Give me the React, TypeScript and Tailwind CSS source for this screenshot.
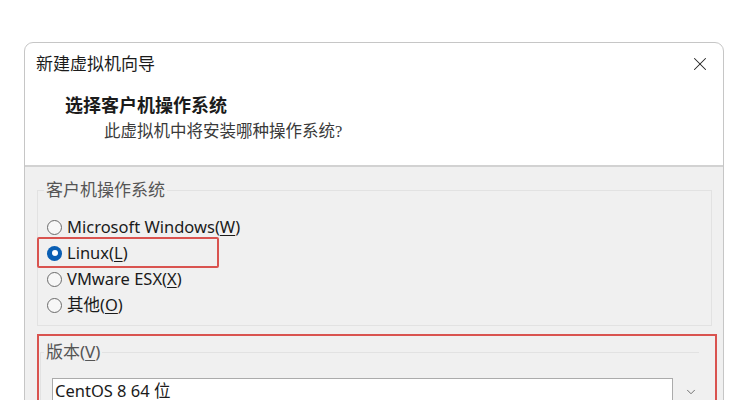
import React from 'react';
import { X, ChevronDown } from 'lucide-react';

const sans = "font-['Noto_Sans','Noto_Sans_CJK_SC',sans-serif]";

interface OsOption {
  label: string;
  key: string;
  checked?: boolean;
  highlight?: boolean;
}

const options: OsOption[] = [
  { label: 'Microsoft Windows', key: 'W' },
  { label: 'Linux', key: 'L', checked: true, highlight: true },
  { label: 'VMware ESX', key: 'X' },
  { label: '其他', key: 'O' },
];

const Radio = ({ checked }: { checked?: boolean }) =>
  checked ? (
    <span className="w-[15px] h-[15px] rounded-full bg-[#0a5fb4] flex items-center justify-center shrink-0">
      <span className="w-[6px] h-[6px] rounded-full bg-white" />
    </span>
  ) : (
    <span className="w-[15px] h-[15px] rounded-full border border-[#6b6b6b] bg-[#f7f7f7] shrink-0" />
  );

export default function App() {
  return (
    <div className={`w-[750px] h-[400px] overflow-hidden bg-white pt-[42px] pl-[24px] ${sans}`}>
      <div className="w-[700px] h-[400px] border border-[#c6c6c6] rounded-t-[9px] overflow-hidden text-[#1b1b1b]">
        {/* title bar */}
        <div className="h-[42px] flex items-center justify-between pl-[11px] pr-[12px]">
          <span className="text-[17px]">新建虚拟机向导</span>
          <X size={22} strokeWidth={1.1} className="text-[#222]" />
        </div>

        {/* header */}
        <div className="h-[82px] pt-[9px] pl-[40px] border-b-2 border-[#d2d2d2]">
          <div className="text-[18px] leading-[24px] font-bold font-['Liberation_Serif','Noto_Sans_CJK_SC',serif]">
            选择客户机操作系统
          </div>
          <div className="mt-[2px] pl-[39px] text-[16.5px] leading-[24px] text-[#3a3a3a] font-['Liberation_Serif','Noto_Sans_CJK_SC',serif]">
            此虚拟机中将安装哪种操作系统?
          </div>
        </div>

        {/* body */}
        <div className="bg-[#f0f0f0] h-full pt-[12px] pl-[12px] pr-[11px]">
          <fieldset className="border border-[#e2e2e2] pl-[9px] pb-[7px] min-w-0">
            <legend className="ml-[-3px] px-[2px] text-[17px] leading-[22px] text-[#555]">客户机操作系统</legend>
            <div className="mt-[13px] flex flex-col">
              {options.map((o) => (
                <div key={o.key} className="relative h-[26px] flex items-center gap-[5px]">
                  {o.highlight && (
                    <span className="absolute left-[-10px] top-[-3px] w-[182px] h-[31px] border-2 border-[#d9534f] rounded-[2px]" />
                  )}
                  <Radio checked={o.checked} />
                  <span className="text-[16.5px] leading-[22px]">
                    {o.label}(<span className="underline underline-offset-2">{o.key}</span>)
                  </span>
                </div>
              ))}
            </div>
          </fieldset>

          <div className="mt-[8px] mr-[-5px] border-2 border-[#d9534f] pl-[1px] pr-[16px] pt-[5px]">
            <fieldset className="border-t border-l border-[#e2e2e2] pl-[11px] min-w-0">
              <legend className="ml-[-8px] px-[2px] text-[17px] leading-[22px] text-[#555]">
                版本(<span className="underline underline-offset-2">V</span>)
              </legend>
              <div className="mt-[15px] flex items-start">
                <div className="w-[622px] h-[28px] bg-white border border-[#ababab] pl-[2px] text-[16.5px] leading-[24px]">
                  CentOS 8 64 位
                </div>
                <div className="w-[26px] h-[24px] flex items-center justify-center">
                  <ChevronDown size={14} strokeWidth={1.4} className="text-[#555] ml-[10px] mt-[4px]" />
                </div>
              </div>
            </fieldset>
          </div>
        </div>
      </div>
    </div>
  );
}
